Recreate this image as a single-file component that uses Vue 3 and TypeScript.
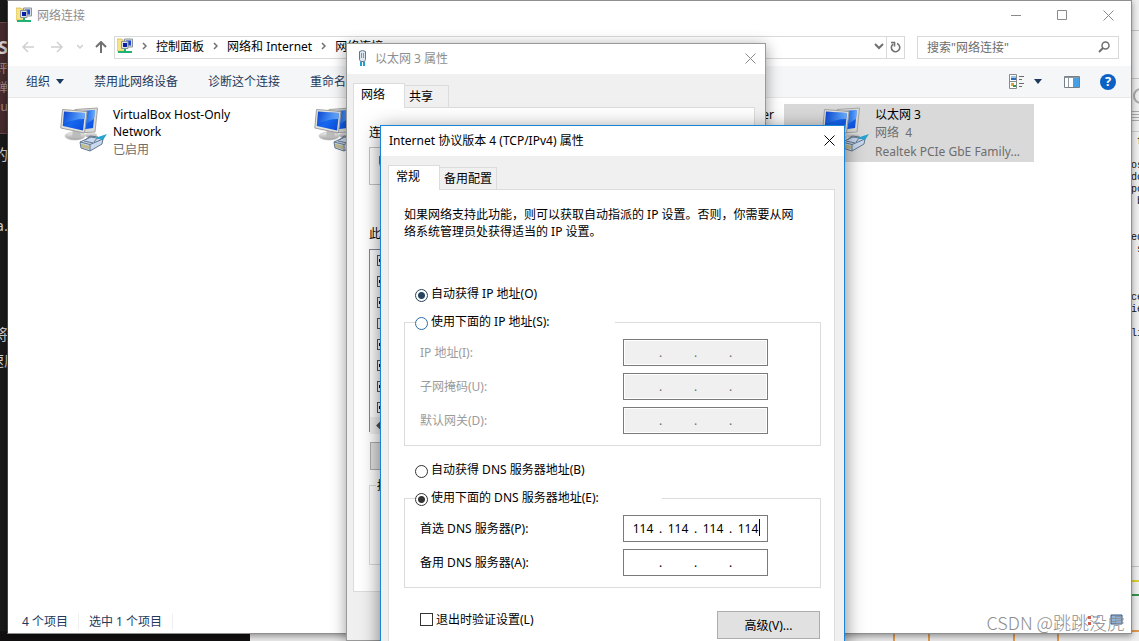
<script setup lang="ts">
import { ref } from 'vue'

interface Connection {
  name: string
  network: string
  device: string
  selected: boolean
  trailing: boolean
}

const connections: Connection[] = [
  { name: 'VirtualBox Host-Only Network', network: '已启用', device: '', selected: false, trailing: false },
  { name: '', network: '', device: '', selected: false, trailing: false },
  { name: 'er', network: '', device: '', selected: false, trailing: true },
  { name: '以太网 3', network: '网络  4', device: 'Realtek PCIe GbE Family...', selected: true, trailing: false },
]

const addressFields = [
  { id: 'ip', label: 'IP 地址(I):' },
  { id: 'mask', label: '子网掩码(U):' },
  { id: 'gateway', label: '默认网关(D):' },
]

const dnsFields = ref([
  { id: 'dns1', label: '首选 DNS 服务器(P):', octets: ['114', '114', '114', '114'], caret: true },
  { id: 'dns2', label: '备用 DNS 服务器(A):', octets: ['', '', '', ''], caret: false },
])

const ipMode = ref('auto')
const dnsMode = ref('manual')
const validate = ref(false)
const components = [true, true, true, false, true, true, true, true]
</script>

<template>
  <div class="desktop">
    <svg width="0" height="0" class="defs" aria-hidden="true">
      <defs>
        <linearGradient id="screen" x1="0" y1="0" x2="1" y2="1">
          <stop offset="0" stop-color="#0636c4" />
          <stop offset="0.5" stop-color="#1668ee" />
          <stop offset="1" stop-color="#0a49dc" />
        </linearGradient>
        <linearGradient id="shine" x1="0" y1="0" x2="1" y2="0">
          <stop offset="0" stop-color="#5aa0fa" stop-opacity=".1" />
          <stop offset="1" stop-color="#8cc6ff" stop-opacity=".75" />
        </linearGradient>
        <linearGradient id="stand" x1="0" y1="0" x2="0" y2="1">
          <stop offset="0" stop-color="#f2f2f2" />
          <stop offset="1" stop-color="#a0a0a0" />
        </linearGradient>
        <symbol id="adapter" viewBox="0 0 48 48">
          <ellipse cx="31" cy="29" rx="6" ry="3" fill="url(#stand)" />
          <path d="M15 3.500 L37.500 2 L35 26 L18 27 Z" fill="#d8d8d5" stroke="#a5a5a3" />
          <path d="M17 5.500 L35 4 L33 22 L19 24 Z" fill="url(#screen)" />
          <path d="M25 5 L35 4 L34 13 L26 18 Z" fill="url(#shine)" />
          <ellipse cx="15" cy="30" rx="10" ry="4" fill="url(#stand)" stroke="#bdbdbd" stroke-width=".6" />
          <path d="M13 23 h7 l1 8 h-9 Z" fill="#bdbdbd" />
          <path d="M2.500 3.500 L27 5.500 L24.500 27 L.8 22 Z" fill="#e2e2df" stroke="#a0a09e" />
          <path d="M4 5.500 L25 7 L23 24.500 L2.800 20 Z" fill="url(#screen)" />
          <path d="M4 5.500 L25 7 L24 13 C16 13 10 15 3.500 18 Z" fill="url(#shine)" />
          <path d="M20 36 L31 31 L43 33 L42 38 L30 45 L21 42 Z" fill="#c9d8ee" stroke="#63788f" />
          <path d="M20 36 L30 38.500 L30 45 M30 38.500 L43 33 M26 33.500 L30 30 L38 31 L34 36 M24 35 L33 37" fill="none" stroke="#63788f" />
          <path d="M22 38 v3.500 M24 38.500 v3.500 M26 39 v3.500 M28 39.500 v3.500" stroke="#b9a02e" />
          <path d="M35 32 L47 28 L43 34 Z" fill="#27a3cf" />
        </symbol>
        <symbol id="folder" viewBox="0 0 16 16">
          <path d="M0 1 h5 v1 h3 v11 h-8 Z" fill="#f7e388" stroke="#d4b54b" stroke-width=".7" />
          <path d="M7.500 1 h8 v8 h-8 Z" fill="#d8dde0" stroke="#8b959a" />
          <rect x="9" y="2.500" width="5" height="5" fill="#1e48d6" />
          <path d="M4.500 3.500 h6.500 v7 h-6.500 Z" fill="#dfe4e6" stroke="#8b959a" />
          <rect x="6" y="5" width="4" height="4" fill="#0a1da5" />
          <path d="M7 11 h2 v2 h6 v2 h-14 v-2 h6 Z" fill="#20b173" />
        </symbol>
      </defs>
    </svg>

    <div class="behind-left" aria-hidden="true">
      <div class="behind-red"><b>S</b><span>评</span><span>弹</span><span>lu</span></div>
      <p class="b1">的</p>
      <p class="b2">a.</p>
      <p class="b3">将</p>
      <p class="b4">速度</p>
    </div>
    <div class="behind-bottom" aria-hidden="true">
      <i class="dark"></i><i class="light"></i><i class="cell"></i><i class="cell wide"></i><i class="cell"></i><i class="rest"></i>
    </div>
    <div class="behind-right" aria-hidden="true">
      <i class="bar1"></i><i class="bar2"></i><i class="ring"></i><i class="stripes"></i>
      <pre> f

os
do
po
 b


ed
 s



ce
ie

li</pre>
      <i class="ln grey"></i><i class="ln yellow"></i><i class="ln green"></i><i class="ln orange"></i>
    </div>

    <main class="window explorer">
      <header class="titlebar">
        <svg class="ico16"><use href="#folder" /></svg>
        <span>网络连接</span>
        <div class="captions">
          <button aria-label="最小化"><svg width="11" height="11"><path d="M0 5.500h10" /></svg></button>
          <button aria-label="最大化"><svg width="11" height="11"><path d="M.5.5h9v9h-9z" /></svg></button>
          <button aria-label="关闭"><svg width="11" height="11"><path d="M.5.5l10 10M10.500.5l-10 10" /></svg></button>
        </div>
      </header>

      <nav class="addressrow">
        <button aria-label="后退"><svg width="12" height="12"><path d="M6 1L1 6l5 5M1 6h11" stroke="#cfcfcf" stroke-width="1.500" /></svg></button>
        <button aria-label="前进"><svg width="12" height="12"><path d="M6 1l5 5-5 5M0 6h11" stroke="#cfcfcf" stroke-width="1.500" /></svg></button>
        <button class="small" aria-label="历史"><svg width="6" height="6"><path d="M0 1l3 3 3-3" stroke="#cfcfcf" stroke-width="1.500" /></svg></button>
        <button class="up" aria-label="上移"><svg width="12" height="12"><path d="M1 6l5-5 5 5M6 1v11" stroke="#707070" stroke-width="2" /></svg></button>
        <div class="address">
          <svg class="ico16"><use href="#folder" /></svg>
          <svg class="chev" width="5" height="8"><path d="M1 1l3 3-3 3" /></svg>
          <a href="#">控制面板</a>
          <svg class="chev" width="5" height="8"><path d="M1 1l3 3-3 3" /></svg>
          <a href="#">网络和 Internet</a>
          <svg class="chev" width="5" height="8"><path d="M1 1l3 3-3 3" /></svg>
          <a href="#">网络连接</a>
          <button class="drop" aria-label="展开"><svg width="10" height="7"><path d="M1 1l4 4 4-4" stroke="#707070" stroke-width="2" /></svg></button>
          <button class="refresh" aria-label="刷新"><svg width="11" height="12"><path d="M7 2.600A4.200 4.200 0 1 1 3 3.200M1 1.500h3.500v4" stroke="#707070" stroke-width="1.600" /></svg></button>
        </div>
        <label class="search">
          <input type="text" placeholder='搜索"网络连接"' aria-label="搜索" />
          <svg width="12" height="12"><circle cx="7.500" cy="4.500" r="3.500" stroke="#707070" stroke-width="1.500" /><path d="M5 7L1 11" stroke="#707070" stroke-width="2" /></svg>
        </label>
      </nav>

      <div class="toolbar">
        <button>组织<i class="tri"></i></button>
        <button>禁用此网络设备</button>
        <button>诊断这个连接</button>
        <button>重命名此连接</button>
        <div class="tools">
          <button aria-label="更改视图">
            <svg width="16" height="16"><path d="M.5.5h7v14h-7zM.5 7.500h7" fill="#fff" stroke="#8a8a8a" /><path d="M2 2h5v2H2z" fill="#9cc6ef" /><path d="M2 4h5v2H2z" fill="#2f6ab8" /><path d="M2 9h3v3H2z" fill="#d9a641" /><path d="M4 11h3v2H4z" fill="#2e9a4a" /><path d="M10 2.500h5M10 5.500h3M10 9.500h5M10 12.500h3" stroke="#6a6a6a" /></svg>
          </button>
          <button class="viewdrop" aria-label="更多选项"><i class="tri"></i></button>
          <button aria-label="预览窗格">
            <svg width="16" height="12"><path d="M.5.5h15v11H.5z" fill="#fff" stroke="#75808a" /><path d="M1 1h14v1H1z" fill="#8c979f" /><path d="M4.500 2v9" stroke="#8c979f" /><path d="M9 2h6v9H9z" fill="#45a0e6" /></svg>
          </button>
          <button class="help" aria-label="帮助">?</button>
        </div>
      </div>

      <section class="items">
        <article v-for="(c, i) in connections" :key="i" class="item" :class="{ selected: c.selected, trailing: c.trailing }">
          <svg class="ico48"><use href="#adapter" /></svg>
          <div class="meta">
            <h3>{{ c.name }}</h3>
            <p>{{ c.network }}</p>
            <p>{{ c.device }}</p>
          </div>
        </article>
      </section>

      <footer class="status"><span>4 个项目</span><span>选中 1 个项目</span>
        <svg width="36" height="14"><path d="M1 2h3v3H1zM1 8h3v3H1z" fill="#c9605a" /><path d="M6 3h7M6 9h7" stroke="#6484b8" /><path d="M24 1h11v9H24z" fill="#8fb4dc" stroke="#36567e" /></svg>
      </footer>
    </main>

    <section class="window dialog props">
      <header class="titlebar">
        <svg width="9" height="16"><path d="M1.500 1.500q3-2 6 0v8l-1 2h-4l-1-2z" fill="#dce7f1" stroke="#60788e" /><path d="M3.500 3v5M5.500 3v5" stroke="#8395a7" /><path d="M3 12v4M6 12v4" stroke="#1e9fd0" stroke-width="2" /></svg>
        <span>以太网 3 属性</span>
        <div class="captions"><button aria-label="关闭"><svg width="11" height="11"><path d="M.5.5l10 10M10.500.5l-10 10" /></svg></button></div>
      </header>
      <div class="tabs" role="tablist">
        <button class="tab on" role="tab">网络</button><button class="tab" role="tab">共享</button>
      </div>
      <div class="panel">
        <p>连接时使用:</p>
        <div class="using"><i></i></div>
        <p>此连接使用下列项目:</p>
        <div class="list">
          <input v-for="(on, i) in components" :key="i" type="checkbox" :checked="on" aria-label="项目" />
          <div class="scroll"><svg width="8" height="9"><path d="M5 1L1.500 4.500 5 8M1 4.500h7" stroke="#505050" stroke-width="2" /></svg></div>
        </div>
        <button class="push">安装(N)...</button>
        <fieldset class="desc"><legend>描述</legend></fieldset>
      </div>
    </section>

    <section class="window dialog ipv4">
      <header class="titlebar">
        <span>Internet 协议版本 4 (TCP/IPv4) 属性</span>
        <div class="captions"><button aria-label="关闭"><svg width="11" height="11"><path d="M.5.5l10 10M10.500.5l-10 10" /></svg></button></div>
      </header>
      <div class="tabs" role="tablist">
        <button class="tab on" role="tab">常规</button><button class="tab" role="tab">备用配置</button>
      </div>
      <div class="panel">
        <p class="intro">如果网络支持此功能，则可以获取自动指派的 IP 设置。否则，你需要从网络系统管理员处获得适当的 IP 设置。</p>

        <label class="radio blue"><input v-model="ipMode" type="radio" name="ip" value="auto" /><span>自动获得 IP 地址(O)</span></label>
        <fieldset class="group">
          <legend><label class="radio hot"><input v-model="ipMode" type="radio" name="ip" value="manual" /><span>使用下面的 IP 地址(S):</span></label></legend>
          <div v-for="f in addressFields" :key="f.id" class="row off">
            <label :for="f.id">{{ f.label }}</label>
            <div class="ipbox">
              <template v-for="n in 4" :key="n">
                <input :id="n === 1 ? f.id : undefined" type="text" disabled :aria-label="f.label + n" /><b v-if="n < 4">.</b>
              </template>
            </div>
          </div>
        </fieldset>

        <label class="radio"><input v-model="dnsMode" type="radio" name="dns" value="auto" /><span>自动获得 DNS 服务器地址(B)</span></label>
        <fieldset class="group dns">
          <legend><label class="radio"><input v-model="dnsMode" type="radio" name="dns" value="manual" /><span>使用下面的 DNS 服务器地址(E):</span></label></legend>
          <div v-for="f in dnsFields" :key="f.id" class="row">
            <label :for="f.id">{{ f.label }}</label>
            <div class="ipbox">
              <template v-for="(o, n) in f.octets" :key="n">
                <input :id="n === 0 ? f.id : undefined" v-model="f.octets[n]" type="text" maxlength="3" :aria-label="f.label + n" /><b v-if="n < 3">.</b>
              </template>
              <i v-if="f.caret" class="caret"></i>
            </div>
          </div>
        </fieldset>

        <div class="bottom">
          <label class="check"><input v-model="validate" type="checkbox" /><span>退出时验证设置(L)</span></label>
          <button class="push">高级(V)...</button>
        </div>
      </div>
    </section>

    <div class="watermark">CSDN @跳跳没虎</div>
  </div>
</template>

<style>
html, body { margin: 0; overflow: hidden; }
</style>

<style scoped>
* { box-sizing: border-box; }
.desktop {
  position: relative; height: 100vh; overflow: hidden; background: #e9e9e9; color: #000;
  font: 12px/17px "Noto Sans", "Noto Sans CJK SC", sans-serif;
}
.defs { position: absolute; }
button { font: inherit; color: inherit; background: none; border: 0; padding: 0; }
input { font: inherit; margin: 0; }
p, h3 { margin: 0; font-weight: 400; font-size: 12px; }
fieldset { margin: 0; padding: 0; min-width: 0; border: 1px solid #dcdcdc; }
svg { fill: none; display: block; flex: none; }
.ico16 { width: 16px; height: 16px; }
.ico48 { width: 48px; height: 48px; }

.behind-left { position: absolute; inset: 0 auto 0 0; width: 8px; overflow: hidden; background: #1a1a1a; color: #ccc; padding-top: 22px; }
.behind-left p { display: flex; justify-content: flex-end; white-space: nowrap; font-size: 15px; }
.behind-red { display: flex; flex-direction: column; align-items: flex-end; height: 112px; background: #452b2d; border: solid #67494b; border-width: 1px 0; padding-top: 12px; line-height: 19px; color: #a08b8c; }
.behind-red b { color: #d6cccc; font-size: 18px; line-height: 24px; }
.behind-left .b1 { margin-top: 12px; }
.behind-left .b2 { margin-top: 54px; }
.behind-left .b3 { margin-top: 92px; }
.behind-left .b4 { margin-top: 9px; justify-content: center; }
.behind-bottom { position: absolute; inset: auto 0 0 0; height: 10px; display: flex; }
.behind-bottom i { border-right: 2px solid #e09a50; flex: 0 0 35px; }
.behind-bottom .dark { flex-basis: 250px; background: #121010; border: 0; }
.behind-bottom .light { flex-basis: 645px; }
.behind-bottom .wide { flex-basis: 85px; }
.behind-bottom .cell:nth-child(5) { flex-basis: 44px; }
.behind-bottom .rest { flex: 1; border: 0; }
.behind-right { position: absolute; inset: 0 0 0 auto; width: 8px; display: flex; flex-direction: column; overflow: hidden; background: #eee; }
.bar1 { height: 32px; flex: none; margin-top: -1px; border-bottom: 1px solid #c3c3c3; }
.bar2 { height: 48px; flex: none; border-bottom: 1px solid #c3c3c3; }
.ring { width: 16px; height: 16px; margin: 9px 0 7px 2px; flex: none; border: 2px solid #aaa; border-radius: 50%; }
.stripes { height: 12px; flex: none; background: repeating-linear-gradient(#aaa 0 1px, #eee 1px 3px); }
.behind-right pre { margin: 8px 0 0; height: 280px; flex: none; border-top: 1px solid #ccc; padding-top: 4px; font: 10px/12px "Liberation Mono", monospace; color: #111; }
.ln { flex: none; height: 2px; }
.grey { background: #c3c3c3; height: 1px; margin-top: 155px; }
.yellow { background: #d8d030; margin-top: 13px; }
.green { background: #37924a; margin-top: 12px; }
.orange { background: #e09a50; margin-top: 34px; }

.window { position: absolute; display: flex; flex-direction: column; background: #fff; }
.explorer { inset: 0 7px 7px; border: 1px solid #8f8f8f; border-left-color: #444; box-shadow: 0 2px 6px rgba(0, 0, 0, .4); }
.titlebar { display: flex; align-items: center; height: 30px; flex: none; background: #fff; color: #8e8e8e; }
.captions { margin-left: auto; display: flex; }
.captions svg { stroke: #8a8a8a; margin: auto; }
.captions button { width: 46px; height: 29px; display: flex; }
.explorer .titlebar { padding: 0 0 2px 8px; gap: 5px; }

.addressrow { display: flex; align-items: center; height: 24px; margin: 4px 12px 0 14px; }
.addressrow button { display: flex; flex: none; }
.addressrow button + button { margin-left: 17px; }
.addressrow button + .small { margin-left: 14px; }
.addressrow button + .up { margin-left: 12px; }
.address { flex: 1; min-width: 0; margin-left: 7px; display: flex; align-items: center; height: 23px; border: 1px solid #d9d9d9; padding: 0 0 2px 2px; white-space: nowrap; }
.address a { color: #000; text-decoration: none; }
.chev { stroke: #707070; margin: 0 9px; }
.chev path { stroke-width: 1.5; }
.address .drop { margin-left: auto; margin-right: 2px; }
.address button.refresh { width: 18px; height: 21px; border-left: 1px solid #d9d9d9; margin: 0 0 -2px; align-items: center; justify-content: center; }
.search { width: 202px; height: 23px; flex: none; margin-left: 12px; border: 1px solid #d9d9d9; display: flex; align-items: center; padding: 0 8px 0 9px; }
.search input { flex: 1; min-width: 0; border: 0; padding: 0; outline: 0; background: none; }
.search input::placeholder { color: #6d6d6d; opacity: 1; }

.toolbar { display: flex; align-items: center; height: 32px; flex: none; margin-top: 7px; padding: 0 15px 0 18px; background: #f5f6f7; border-bottom: 1px solid #e8e8e8; color: #1e395b; gap: 30px; }
.toolbar button { display: flex; align-items: center; white-space: nowrap; }
.tri { border: 4px solid transparent; border-top: 5px solid #1e395b; border-bottom: 0; margin-left: 6px; }
.tools { margin-left: auto; display: flex; align-items: center; }
.tools .viewdrop { margin: 0 22px 0 3px; }
.tools .help { width: 16px; height: 16px; margin-left: 20px; justify-content: center; border-radius: 50%; background: #0b62c4; color: #fff; font-weight: 700; font-size: 13px; }

.items { flex: 1; display: grid; grid-template-columns: repeat(4, 250px); gap: 4px; align-content: start; padding: 6px 0 0 14px; }
.item { display: flex; height: 58px; padding: 2px 0 0 38px; gap: 5px; }
.item.selected { background: #d9d9d9; }
.meta { flex: 1; min-width: 0; padding-right: 6px; white-space: pre-wrap; }
.meta p { color: #6d6d6d; line-height: 19px; }
.trailing .meta { text-align: right; }
.status { height: 24px; flex: none; display: flex; align-items: center; padding: 0 14px; color: #1e395b; }
.status span { padding-right: 10px; margin-right: 10px; border-right: 1px solid #f0f0f0; }
.status svg { margin-left: auto; margin-right: -6px; }

.dialog { background: #f0f0f0; }
.props { left: 346px; top: 43px; width: 420px; bottom: 0; border: 1px solid #9a9a9a; box-shadow: 0 3px 14px rgba(0, 0, 0, .4); }
.dialog .titlebar { padding-bottom: 2px; }
.props .titlebar { padding-left: 11px; gap: 8px; }
.dialog .captions button { width: 30px; }
.ipv4 { left: 380px; top: 125px; width: 465px; bottom: -40px; border: 1px solid #1883d7; box-shadow: 0 4px 18px rgba(0, 0, 0, .5); }
.ipv4 .titlebar { padding-left: 8px; color: #000; }
.ipv4 .captions svg { stroke: #000; }
.tabs { display: flex; align-items: flex-end; padding: 9px 7px 0; height: 33px; flex: none; }
.props .tabs { padding-left: 6px; }
.tab { height: 22px; padding: 0 4px; border: 1px solid #dcdcdc; border-width: 1px 1px 0 0; }
.props .tab { padding-right: 15px; }
.tab.on, .props .tab.on { height: 25px; width: 52px; padding: 0 0 3px 7px; text-align: left; background: #fff; border-width: 1px 1px 0; margin-bottom: -1px; z-index: 1; }
.panel { background: #fff; border: 1px solid #dcdcdc; margin: 0 9px 0 7px; }

.props .panel { height: 485px; margin-left: 6px; margin-right: 10px; padding: 16px 15px 0; }
.using { height: 38px; margin: 6px 0 40px; border: 1px solid #c4c4c4; padding: 8px 9px; }
.using i { display: block; width: 10px; height: 10px; background: #52738f; border-bottom: 2px solid #b9c9d3; }
.list { height: 183px; margin-top: 7px; border: 1px solid #828790; display: flex; flex-direction: column; gap: 10px; padding-top: 5px; }
.list input { appearance: none; width: 11px; height: 11px; flex: none; margin-left: 7px; border: 1px solid #555; }
.list input:checked { background: linear-gradient(#000, #000) 1px 3px / 6px 3px no-repeat; }
.scroll { height: 17px; margin-top: -6px; background: #f0f0f0; padding: 4px 6px; }
.push { background: #e1e1e1; border: 1px solid #adadad; width: 103px; height: 28px; }
.props .push { margin: 10px 0 0 1px; display: block; }
.desc { height: 88px; margin-top: 7px; }
.desc legend { margin-left: 6px; padding: 0 1px; }

.ipv4 .panel { flex: 1; padding: 16px 13px 0 15px; }
.intro { width: 396px; margin-bottom: 45px; }
.radio { display: flex; align-items: flex-start; gap: 3px; height: 18px; margin-left: 11px; white-space: nowrap; }
.radio input { appearance: none; width: 13px; height: 13px; flex: none; margin-top: 4px; border: 1px solid #333; border-radius: 50%; background: #fff; }
.radio input:checked { background: radial-gradient(circle, #333 0 3px, #fff 4px); }
.blue input { border-color: #264460; }
.blue input:checked { background: radial-gradient(circle, #264460 0 3px, #fff 4px); }
.hot input { border-color: #2a6ca8; }
.group { margin: 10px 0 15px; height: 133px; }
.group legend { padding: 0; margin-left: 10px; width: 200px; }
.group .radio { margin-left: 0; }
.row { display: flex; align-items: center; height: 26px; margin: 8px 52px 0 15px; }
.off { color: #9b9b9b; }
.ipbox { position: relative; width: 145px; height: 27px; margin-left: auto; padding-left: 7px; border: 1px solid #7a7a7a; display: flex; align-items: center; background: #fff; color: #000; }
.ipbox input { width: 24px; height: 20px; padding: 0; border: 0; outline: 0; background: none; text-align: center; }
.ipbox b { width: 11px; text-align: center; font-weight: 400; }
.off .ipbox { background: #f0f0f0; box-shadow: inset 0 0 0 1px #fff; color: #6d6d6d; }
.caret { position: absolute; right: 7px; top: 3px; width: 1px; height: 17px; background: #000; }
.group.dns { height: 99px; margin-bottom: 23px; }
.dns legend { width: 247px; }
.bottom { display: flex; justify-content: space-between; align-items: flex-start; padding: 0 1px 0 16px; }
.check { display: flex; align-items: center; gap: 3px; }
.check input { appearance: none; width: 13px; height: 13px; border: 1px solid #333; background: #fff; }
.watermark { position: absolute; right: 14px; bottom: 6px; font: 18px/26px "Noto Sans CJK SC", sans-serif; font-weight: 300; color: #8e8e8e; }
</style>
